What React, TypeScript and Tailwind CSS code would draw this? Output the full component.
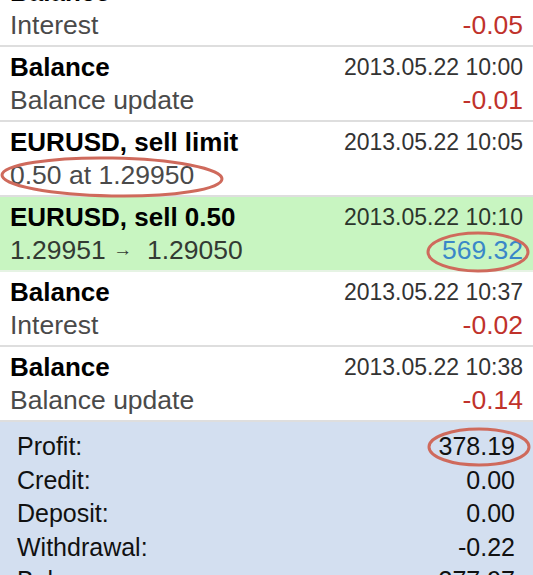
import React from "react";

type Row = {
  title: string;
  date: string;
  sub: React.ReactNode;
  value?: string;
  valueColor?: string;
  green?: boolean;
};

const rows: Row[] = [
  { title: "Balance", date: "2013.05.21 23:59", sub: "Interest", value: "-0.05", valueColor: "text-[#c0322b]" },
  { title: "Balance", date: "2013.05.22 10:00", sub: "Balance update", value: "-0.01", valueColor: "text-[#c0322b]" },
  { title: "EURUSD, sell limit", date: "2013.05.22 10:05", sub: "0.50 at 1.29950" },
  {
    title: "EURUSD, sell 0.50",
    date: "2013.05.22 10:10",
    sub: (
      <span className="whitespace-pre">
        1.29951 <span className="relative -top-[3px] text-[19px]">→</span>{"  "}1.29050
      </span>
    ),
    value: "569.32",
    valueColor: "text-[#3a87c8]",
    green: true,
  },
  { title: "Balance", date: "2013.05.22 10:37", sub: "Interest", value: "-0.02", valueColor: "text-[#c0322b]" },
  { title: "Balance", date: "2013.05.22 10:38", sub: "Balance update", value: "-0.14", valueColor: "text-[#c0322b]" },
];

const summary = [
  ["Profit:", "378.19"],
  ["Credit:", "0.00"],
  ["Deposit:", "0.00"],
  ["Withdrawal:", "-0.22"],
  ["Balance:", "377.97"],
];

export default function App() {
  return (
    <div
      className="relative h-[575px] w-[533px] overflow-hidden bg-white"
      style={{ fontFamily: '"Liberation Sans", Arial, sans-serif' }}
    >
      <div className="-mt-[28px] flex flex-col">
        {rows.map((r, i) => (
          <div
            key={i}
            className={`flex h-[75px] flex-col border-b-[2px] px-[10px] pt-[5px] ${
              r.green ? "bg-[#c8f5c1] border-[#e6f3e4]" : "bg-white border-[#dedede]"
            }`}
          >
            <div className="flex h-[30px] items-center justify-between">
              <span className="text-[26px] font-bold text-black">{r.title}</span>
              <span className={`text-[23px] ${r.green ? "text-[#2c352c]" : "text-[#333333]"}`}>{r.date}</span>
            </div>
            <div className="mt-[4px] flex h-[30px] items-center justify-between">
              <span className={`text-[26.5px] ${r.green ? "text-[#333a33]" : "text-[#4a4a4a]"}`}>{r.sub}</span>
              {r.value && <span className={`text-[26.5px] ${r.valueColor}`}>{r.value}</span>}
            </div>
          </div>
        ))}
        <div className="flex flex-col bg-[#d3dff0] pl-[17px] pr-[18px] pt-[8px]">
          {summary.map(([k, v]) => (
            <div key={k} className="flex h-[33.5px] items-center justify-between text-[25px] text-[#111111]">
              <span>{k}</span>
              <span>{v}</span>
            </div>
          ))}
        </div>
      </div>
      <svg className="pointer-events-none absolute left-0 top-0" width="533" height="575" viewBox="0 0 533 575">
        <g fill="none" stroke="#cf6a5c" strokeWidth="3">
          <ellipse cx="112" cy="177" rx="110" ry="19" transform="rotate(1 112 177)" />
          <ellipse cx="478" cy="252" rx="50" ry="19" />
          <ellipse cx="479" cy="447" rx="50" ry="18" />
        </g>
      </svg>
    </div>
  );
}
